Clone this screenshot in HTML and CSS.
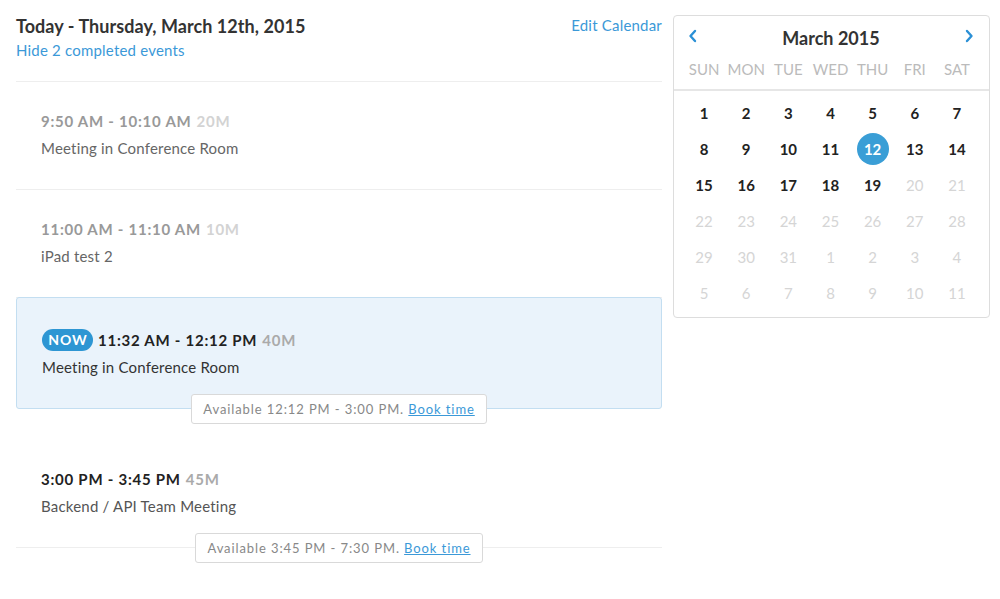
FILE: index.html
```html
<!DOCTYPE html>
<html>
<head>
<meta charset="utf-8">
<link rel="stylesheet" href="styles.css">
</head>
<body>
<div class="page">
  <main class="agenda">
    <header class="agenda-head">
      <div>
        <h1 class="title">Today - Thursday, March 12th, 2015</h1>
        <a class="link hide-link">Hide 2 completed events</a>
      </div>
      <a class="link edit-link">Edit Calendar</a>
    </header>

    <div class="event done">
      <div class="time">9:50 AM - 10:10 AM <span class="dur">20M</span></div>
      <div class="name">Meeting in Conference Room</div>
    </div>
    <div class="event done">
      <div class="time">11:00 AM - 11:10 AM <span class="dur">10M</span></div>
      <div class="name">iPad test 2</div>
    </div>
    <div class="event now">
      <div class="time"><span class="badge">NOW</span>11:32 AM - 12:12 PM <span class="dur">40M</span></div>
      <div class="name">Meeting in Conference Room</div>
    </div>
    <div class="gap"><div class="pill">Available 12:12 PM - 3:00 PM. <a class="book">Book time</a></div></div>
    <div class="event next">
      <div class="time">3:00 PM - 3:45 PM <span class="dur">45M</span></div>
      <div class="name">Backend / API Team Meeting</div>
    </div>
    <div class="gap"><div class="pill">Available 3:45 PM - 7:30 PM. <a class="book">Book time</a></div></div>
  </main>

  <aside class="cal">
    <div class="cal-head">
      <div class="cal-nav">
        <svg class="chev" width="10" height="14" viewBox="0 0 10 14"><path d="M7 2 L2.5 7 L7 12" fill="none" stroke="#2b90d6" stroke-width="2.4" stroke-linecap="round" stroke-linejoin="round"/></svg>
        <span class="month">March 2015</span>
        <svg class="chev" width="10" height="14" viewBox="0 0 10 14"><path d="M3 2 L7.5 7 L3 12" fill="none" stroke="#2b90d6" stroke-width="2.4" stroke-linecap="round" stroke-linejoin="round"/></svg>
      </div>
      <div class="dows">
        <span>SUN</span><span>MON</span><span>TUE</span><span>WED</span><span>THU</span><span>FRI</span><span>SAT</span>
      </div>
    </div>
    <div class="days">
      <span class="d">1</span><span class="d">2</span><span class="d">3</span><span class="d">4</span><span class="d">5</span><span class="d">6</span><span class="d">7</span>
      <span class="d">8</span><span class="d">9</span><span class="d">10</span><span class="d">11</span><span class="d sel"><b>12</b></span><span class="d">13</span><span class="d">14</span>
      <span class="d">15</span><span class="d">16</span><span class="d">17</span><span class="d">18</span><span class="d">19</span><span class="d off">20</span><span class="d off">21</span>
      <span class="d off">22</span><span class="d off">23</span><span class="d off">24</span><span class="d off">25</span><span class="d off">26</span><span class="d off">27</span><span class="d off">28</span>
      <span class="d off">29</span><span class="d off">30</span><span class="d off">31</span><span class="d off">1</span><span class="d off">2</span><span class="d off">3</span><span class="d off">4</span>
      <span class="d off">5</span><span class="d off">6</span><span class="d off">7</span><span class="d off">8</span><span class="d off">9</span><span class="d off">10</span><span class="d off">11</span>
    </div>
  </aside>
</div>
</body>
</html>
```

FILE: styles.css
```css
* { box-sizing: border-box; }
html, body { margin: 0; padding: 0; background: #fff; }
body {
  font-family: "Lato", "Liberation Sans", sans-serif;
  color: #333;
  width: 1000px;
  height: 599px;
  overflow: hidden;
}
.page {
  display: flex;
  align-items: flex-start;
  padding-left: 16px;
  gap: 11px;
}
.agenda { width: 646px; }
.agenda-head {
  display: flex;
  justify-content: space-between;
  align-items: flex-start;
  padding-top: 14px;
  height: 82px;
  border-bottom: 1px solid #eeeeee;
}
.title {
  margin: 0;
  font-size: 18px;
  line-height: 24px;
  font-weight: 700;
  letter-spacing: 0.05px;
  color: #333;
}
.link { color: #3b99d8; font-size: 15px; line-height: 24px; letter-spacing: 0.2px; cursor: pointer; }
.hide-link { display: block; }
.edit-link { margin-top: -1px; }

.event {
  padding: 28px 25px 31px;
  border-bottom: 1px solid #eeeeee;
}
.time {
  display: flex;
  align-items: center;
  font-size: 15px;
  line-height: 20px;
  font-weight: 700;
  letter-spacing: 0.75px;
  color: #222;
  height: 22px;
}
.time .dur { font-weight: 700; color: #aaa; margin-left: 5px; }
.name { font-size: 15px; line-height: 20px; margin-top: 6px; letter-spacing: 0.2px; color: #555; }

.done .time { color: #999; }
.done .time .dur { color: #d3d3d3; }
.done .name { color: #666; }

.now {
  margin-top: -1px;
  background: #eaf3fb;
  border: 1px solid #c3def1;
  border-radius: 3px;
  padding: 31px 25px 31px;
}
.now .name { color: #333; }
.badge {
  display: inline-flex;
  align-items: center;
  justify-content: center;
  height: 22px;
  width: 51px;
  border-radius: 11px;
  background: #2d96d3;
  color: #fff;
  font-size: 14px;
  letter-spacing: 1px;
  padding-left: 1px;
  margin-right: 5px;
}

.next { padding-top: 44px; padding-bottom: 31px; }

.gap {
  display: flex;
  justify-content: center;
  margin-top: -15px;
  position: relative;
  z-index: 1;
}
.pill {
  height: 30px;
  display: flex;
  align-items: center;
  padding: 0 11px;
  background: #fff;
  border: 1px solid #d9d9d9;
  border-radius: 3px;
  font-size: 13px;
  letter-spacing: 0.9px;
  color: #888;
  white-space: pre;
}
.book { color: #3b99d8; text-decoration: underline; cursor: pointer; }

.cal {
  width: 317px;
  margin-top: 15px;
  border: 1px solid #dddddd;
  border-radius: 4px;
}
.cal-head {
  padding: 10px 11px 10px 9px;
  border-bottom: 2px solid #e6e6e6;
}
.cal-nav {
  display: flex;
  justify-content: space-between;
  align-items: flex-start;
  padding: 0 4px 0 5px;
  height: 33px;
}
.chev { margin-top: 3px; }
.month { font-size: 18px; line-height: 24px; font-weight: 700; color: #333; }
.dows {
  display: grid;
  grid-template-columns: repeat(7, 1fr);
  text-align: center;
  font-size: 15px;
  line-height: 20px;
  color: #bbb;
}
.days {
  display: grid;
  grid-template-columns: repeat(7, 1fr);
  grid-auto-rows: 36px;
  padding: 4px 11px 6px 9px;
}
.d {
  display: flex;
  align-items: center;
  justify-content: center;
  font-size: 15px;
  font-weight: 700;
  color: #222;
}
.d.off { color: #d5d5d5; font-weight: 400; }
.d.sel b {
  width: 32px;
  height: 32px;
  border-radius: 50%;
  background: #3a9ed6;
  color: #fff;
  display: flex;
  align-items: center;
  justify-content: center;
  font-weight: 700;
}
```
